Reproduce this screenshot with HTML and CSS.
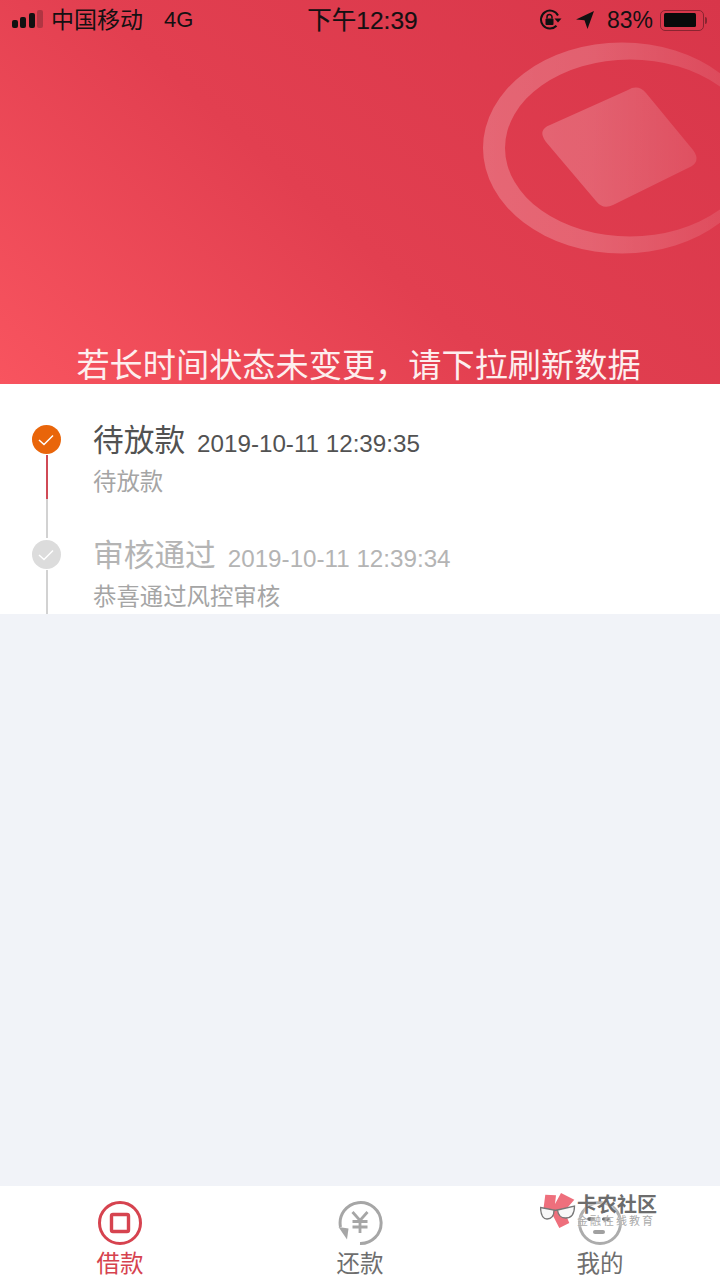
FILE: index.html
```html
<!DOCTYPE html>
<html lang="zh-CN">
<head>
  <meta charset="UTF-8">
  <meta name="viewport" content="width=device-width, initial-scale=1.0">
  <title>借款</title>
  <link rel="stylesheet" href="styles.css">
</head>
<body>
  <div class="page">
    <!-- Red header with status bar -->
    <header class="hero">
      <svg class="hero-art" viewBox="0 0 720 384" width="720" height="384">
        <defs>
          <linearGradient id="artFade" x1="483" y1="0" x2="720" y2="0" gradientUnits="userSpaceOnUse">
            <stop offset="0" stop-color="#fff" stop-opacity="0.22"/>
            <stop offset="0.45" stop-color="#fff" stop-opacity="0.2"/>
            <stop offset="1" stop-color="#fff" stop-opacity="0.1"/>
          </linearGradient>
        </defs>
        <path fill="url(#artFade)" fill-rule="evenodd" d="M483 148a139 105.500 0 1 0 278 0a139 105.500 0 1 0 -278 0z M505 148a125 88.500 0 1 0 250 0a125 88.500 0 1 0 -250 0z"/>
        <path fill="url(#artFade)" d="M628 90Q638 84 646 93L693 150Q702 162 688 168L613 205Q603 210 596 201L546 142Q537 130 550 125z"/>
      </svg>
      <div class="status-bar">
        <div class="status-left">
          <span class="signal"><i class="on s1"></i><i class="on s2"></i><i class="on s3"></i><i class="s4"></i></span>
          <span class="carrier">中国移动</span>
          <span class="network">4G</span>
        </div>
        <div class="status-time">下午12:39</div>
        <div class="status-right">
          <svg class="ico-lock" width="24" height="22" viewBox="0 0 24 22">
            <path d="M17.500 16.800A9 9 0 1 1 19 6.500" fill="none" stroke="#111" stroke-width="2"/>
            <path d="M15.500 9.500h7l-3.500 4z" fill="#111"/>
            <rect x="6.500" y="9.500" width="8" height="6.500" rx="1" fill="#111"/>
            <path d="M8 9.500V8a2.500 2.500 0 0 1 5 0v1.500" fill="none" stroke="#111" stroke-width="1.500"/>
          </svg>
          <svg class="ico-loc" width="20" height="20" viewBox="0 0 20 20">
            <path d="M19 1L1 9.500l8.500 .8L12.500 19z" fill="#111"/>
          </svg>
          <span class="battery-pct">83%</span>
          <span class="battery"><span class="battery-fill"></span></span>
          <span class="battery-tip"></span>
        </div>
      </div>
      <p class="hero-tip">若长时间状态未变更，请下拉刷新数据</p>
    </header>

    <!-- Status timeline -->
    <section class="timeline">
      <div class="step step-current">
        <div class="rail">
          <span class="dot">
            <svg width="18" height="14" viewBox="0 0 18 14"><path d="M2 7l5 4.500L16 2.500" fill="none" stroke="#fff" stroke-width="1.500"/></svg>
          </span>
          <span class="line"></span>
        </div>
        <div class="step-body">
          <div class="step-head"><span class="step-title">待放款</span><span class="step-date">2019-10-11 12:39:35</span></div>
          <div class="step-desc">待放款</div>
        </div>
      </div>
      <div class="step step-done">
        <div class="rail">
          <span class="dot">
            <svg width="18" height="14" viewBox="0 0 18 14"><path d="M2 7l5 4.500L16 2.500" fill="none" stroke="#fff" stroke-width="1.500"/></svg>
          </span>
          <span class="line"></span>
        </div>
        <div class="step-body">
          <div class="step-head"><span class="step-title">审核通过</span><span class="step-date">2019-10-11 12:39:34</span></div>
          <div class="step-desc">恭喜通过风控审核</div>
        </div>
      </div>
    </section>

    <main class="empty"></main>

    <!-- Bottom tabs -->
    <nav class="tabbar">
      <div class="tab tab-active">
        <svg width="46" height="46" viewBox="0 0 46 46">
          <circle cx="23" cy="23" r="20.500" fill="none" stroke="#d6434f" stroke-width="3"/>
          <rect x="14.500" y="14.500" width="17" height="17" rx="1.500" fill="none" stroke="#d6434f" stroke-width="3.400"/>
        </svg>
        <span>借款</span>
      </div>
      <div class="tab">
        <svg width="46" height="46" viewBox="0 0 46 46">
          <path d="M3.500 27A20.500 20.500 0 1 1 23 43.500" fill="none" stroke="#a6a6a6" stroke-width="3"/>
          <path d="M1.500 27l10 1.500-1.500 11z" fill="#a6a6a6"/>
          <path d="M15.500 12l7.500 8.500 7.500-8.500M15.500 21.500h15M15.500 27h15M23 20v13" fill="none" stroke="#a6a6a6" stroke-width="2.800"/>
        </svg>
        <span>还款</span>
      </div>
      <div class="tab">
        <svg width="46" height="46" viewBox="0 0 46 46">
          <circle cx="23" cy="23" r="20.500" fill="none" stroke="#acacac" stroke-width="3"/>
          <rect x="16" y="30" width="12" height="4" rx="2" fill="#a0a0a0"/>
          <ellipse cx="14" cy="19" rx="4" ry="2" fill="#666"/>
          <ellipse cx="29" cy="19" rx="4" ry="2" fill="#666"/>
        </svg>
        <span>我的</span>
      </div>
    </nav>

    <!-- Forum watermark stamped over the tab bar -->
    <div class="watermark">
      <svg class="wm-logo" width="36" height="38" viewBox="0 0 36 38">
        <path d="M5.300 2.700L16 3.300L15 12L21 1L34.300 7.700L24.300 19.300L29.300 31L19.300 36L13.300 24.300L2.700 22.700z" fill="#ee6f7c"/>
        <path d="M0.500 15.500L14 18Q14 27 7 27Q1 27 0.500 15.500z" fill="#f8f8f8" stroke="#777" stroke-width="1.300"/>
        <path d="M17.500 18L34.500 14Q34.500 26 25.500 26Q18.500 26 17.500 18z" fill="#f8f8f8" stroke="#777" stroke-width="1.300"/>
        <path d="M14 18.500L17.500 18" stroke="#777" stroke-width="1.300"/>
      </svg>
      <div class="wm-text">
        <div class="wm-name">卡农社区</div>
        <div class="wm-sub">金融在线教育</div>
      </div>
    </div>
  </div>
</body>
</html>
```

FILE: styles.css
```css
* {
    box-sizing: border-box;
}

body {
    margin: 0;
    font-family: "Liberation Sans", "Noto Sans CJK SC", sans-serif;
    background-color: #f1f3f8;
}

.page {
    position: relative;
    width: 720px;
    height: 1280px;
    display: flex;
    flex-direction: column;
    overflow: hidden;
}

/* Header */
.hero {
    position: relative;
    height: 384px;
    flex: none;
    display: flex;
    flex-direction: column;
    justify-content: space-between;
    background: linear-gradient(42deg, #f8545f 0%, #e23f50 45%, #d8364a 100%);
}

.hero-art {
    position: absolute;
    top: 0;
    left: 0;
}

.status-bar {
    position: relative;
    height: 40px;
    display: grid;
    grid-template-columns: 1fr auto 1fr;
    align-items: center;
    padding: 0 16px 0 12px;
    color: #141012;
}

.status-left,
.status-right {
    display: flex;
    align-items: center;
}

.status-right {
    justify-content: flex-end;
}

.signal {
    display: flex;
    align-items: flex-end;
    gap: 2.600px;
    width: 31px;
    height: 20px;
    padding-bottom: 2px;
}

.signal i {
    width: 5.800px;
    background-color: rgba(20, 16, 18, 0.25);
    border-radius: 2px;
}

.signal i.on {
    background-color: #111;
}

.s1 { height: 8px; }
.s2 { height: 11px; }
.s3 { height: 15px; }
.s4 { height: 18px; }

.carrier {
    margin-left: 8px;
    margin-bottom: 4px;
    font-size: 23px;
}

.network {
    margin-left: 21px;
    font-size: 22px;
}

.status-time {
    font-size: 24.500px;
    margin-bottom: 4px;
    margin-left: 9px;
    -webkit-text-stroke: 0.2px #141012;
}

.ico-lock {
    margin-right: 12px;
}

.ico-loc {
    margin-right: 12px;
}

.battery-pct {
    font-size: 23px;
    margin-right: 7px;
}

.battery {
    width: 44px;
    height: 21px;
    padding: 2.500px;
    border: 1.500px solid #8a2430;
    border-radius: 5px;
    display: flex;
}

.battery-fill {
    width: 89%;
    background-color: #0a0a0a;
    border-radius: 1.500px;
}

.battery-tip {
    width: 2px;
    height: 7px;
    margin-left: 1px;
    margin-right: -3px;
    background-color: #8a2430;
    border-radius: 0 2px 2px 0;
}

.hero-tip {
    position: relative;
    margin: 0 0 -1px;
    padding-right: 3px;
    text-align: center;
    font-size: 33.200px;
    line-height: 38px;
    color: #fdeeee;
}

/* Timeline */
.timeline {
    height: 230px;
    flex: none;
    background-color: #fff;
    padding-top: 41px;
    overflow: hidden;
}

.step {
    display: flex;
    height: 115px;
}

.rail {
    width: 93px;
    flex: none;
    display: flex;
    flex-direction: column;
    align-items: center;
}

.dot {
    width: 29px;
    height: 29px;
    border-radius: 50%;
    flex: none;
    display: flex;
    align-items: center;
    justify-content: center;
    margin-left: -1px;
}

.line {
    width: 2px;
    flex: 1;
    margin-top: 1px;
    margin-bottom: 2px;
}

.step-current .dot {
    background-color: #e9650a;
}

.step-current .line {
    background: linear-gradient(#d04a56 0, #d04a56 44px, #d2d2d2 44px);
}

.step-done .dot {
    background-color: #dcdcdc;
}

.step-done .line {
    background-color: #d2d2d2;
}

.step-head {
    height: 38px;
    margin-top: -3px;
    white-space: nowrap;
    line-height: 38px;
}

.step-title {
    font-size: 30.700px;
}

.step-date {
    font-size: 24.200px;
    margin-left: 12px;
    vertical-align: -1px;
}

.step-desc {
    margin-top: 6px;
    font-size: 23.400px;
    line-height: 32px;
}

.step-current .step-title,
.step-current .step-date {
    color: #525252;
}

.step-current .step-desc {
    color: #a5a5a5;
}

.step-done .step-title,
.step-done .step-date {
    color: #b4b4b4;
}

.step-done .step-desc {
    color: #a5a5a5;
}

.empty {
    flex: 1;
    background-color: #f1f3f8;
}

/* Tab bar */
.tabbar {
    height: 94px;
    flex: none;
    display: grid;
    grid-template-columns: repeat(3, 1fr);
    background-color: #fff;
    padding-top: 14px;
}

.tab {
    display: flex;
    flex-direction: column;
    align-items: center;
    font-size: 23.500px;
    line-height: 32px;
    color: #6e6e6e;
}

.tab svg {
    flex: none;
}

.tab span {
    margin-top: 2px;
}

.tab-active {
    color: #d6434f;
}

/* Watermark */
.watermark {
    position: absolute;
    left: 540px;
    top: 1192px;
    display: flex;
    gap: 1px;
}

.wm-text {
    margin-top: 2px;
    text-shadow: 0 0 2px #fff;
}

.wm-name {
    font-size: 20px;
    line-height: 22px;
    font-weight: 700;
    color: #6c6c6c;
}

.wm-sub {
    font-size: 11px;
    line-height: 10px;
    letter-spacing: 2px;
    color: #aaa;
    white-space: nowrap;
}
```
